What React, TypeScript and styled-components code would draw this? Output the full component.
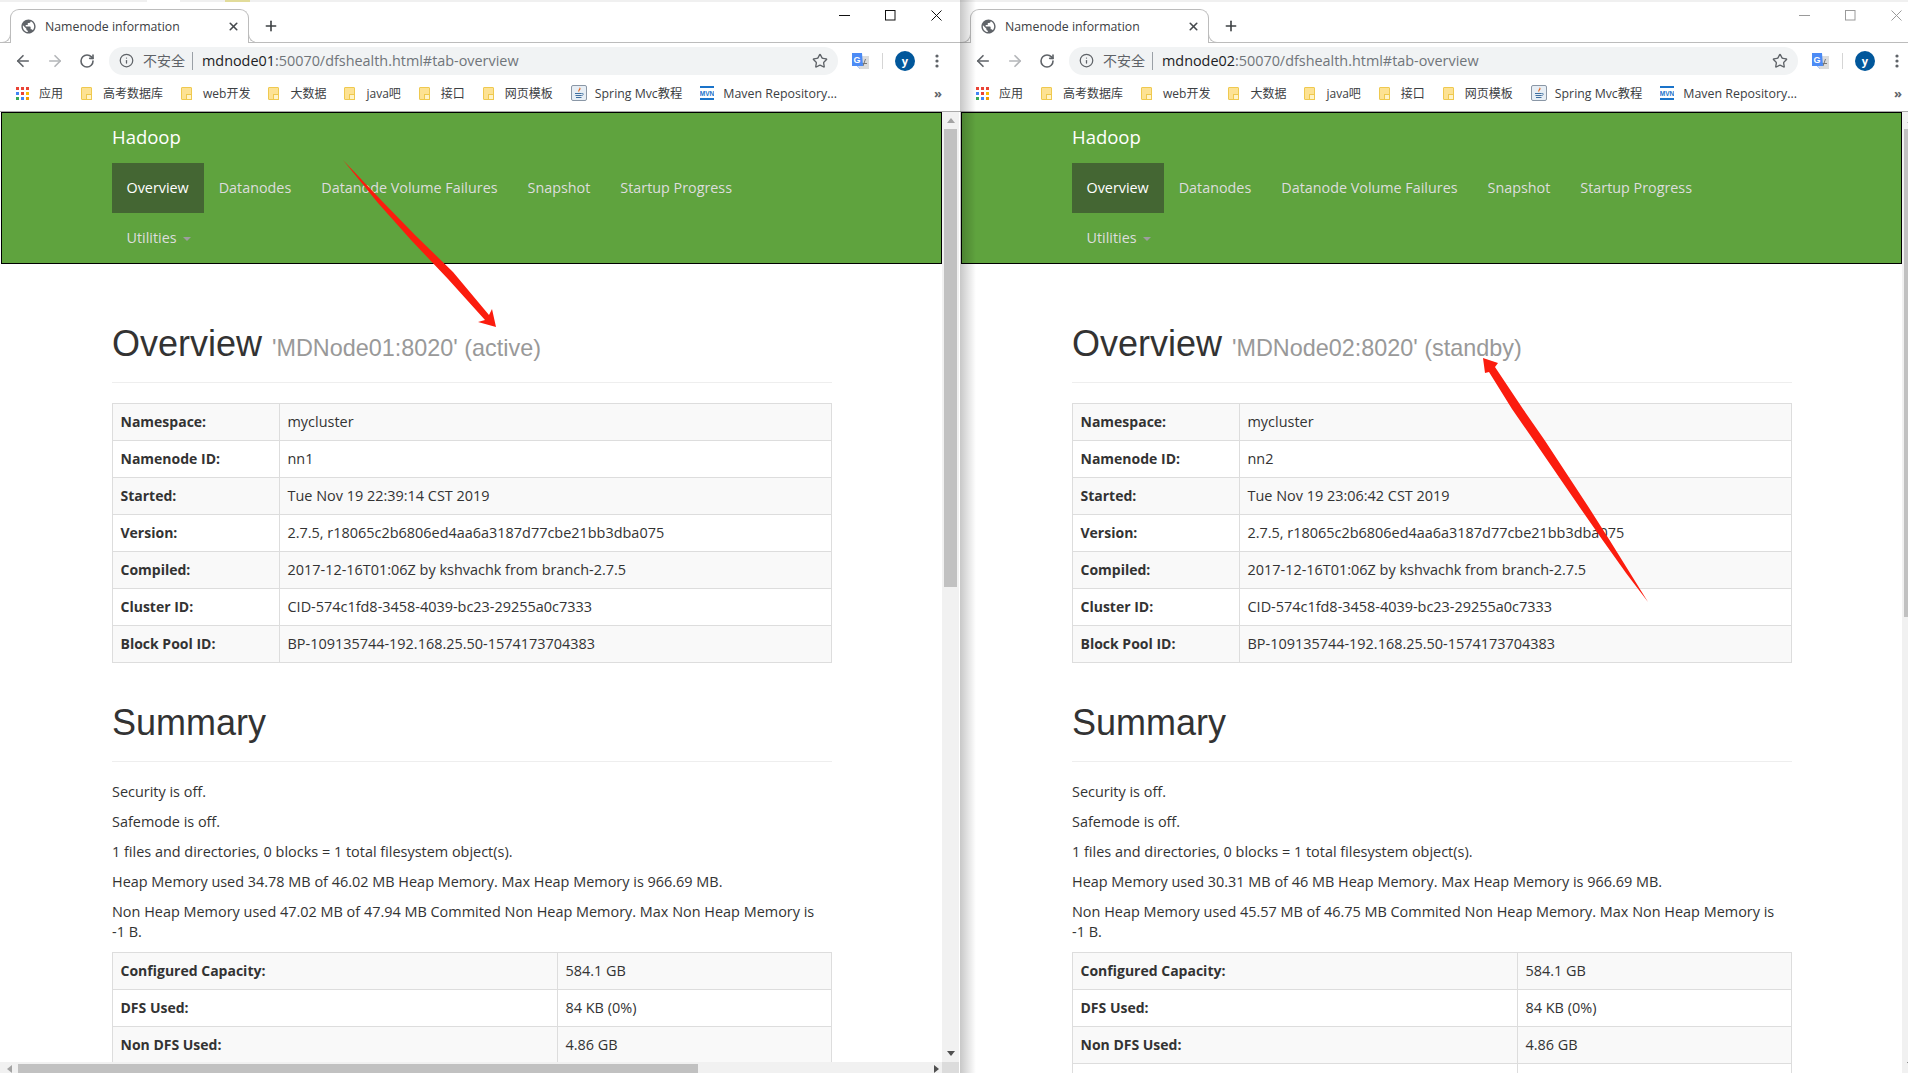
import styled, { createGlobalStyle } from "styled-components";
import { ArrowLeft, ArrowRight, Info, Plus, RotateCw, Star, X } from "lucide-react";

const uiFont = `"Open Sans", "Noto Sans CJK SC", sans-serif`;

const GlobalStyle = createGlobalStyle`
  html, body {
    margin: 0;
    padding: 0;
    background: #fff;
  }
  * {
    box-sizing: border-box;
  }
`;

const Desktop = styled.div`
  position: relative;
  display: flex;
  width: 1908px;
  height: 1073px;
  overflow: hidden;
  font-family: ${uiFont};
`;

const Window = styled.section<{ $shadow?: boolean }>`
  position: relative;
  flex: none;
  display: flex;
  flex-direction: column;
  width: 960px;
  height: 1073px;
  background: #fff;

  &::before {
    content: "";
    display: ${(p) => (p.$shadow ? "block" : "none")};
    position: absolute;
    top: 0;
    bottom: 0;
    left: 0;
    width: 16px;
    background: linear-gradient(90deg, rgba(0, 0, 0, 0.22), rgba(0, 0, 0, 0));
    pointer-events: none;
    z-index: 2;
  }
`;

const TopSliver = styled.div<{ $behind?: boolean }>`
  flex: none;
  height: 2px;
  background: ${(p) =>
    p.$behind
      ? "linear-gradient(90deg, #f0f0f0 147px, #fff 147px, #fff 180px, #f0f0f0 180px, #f0f0f0 225px, #e2dc9a 225px, #e2dc9a 250px, #f0f0f0 250px)"
      : "#f0f0f0"};
`;

const TabStrip = styled.div`
  flex: none;
  display: flex;
  align-items: flex-start;
  height: 41px;
  border-bottom: 1px solid #bcbcbc;
  background: #fff;
`;

const Tab = styled.div`
  position: relative;
  display: flex;
  align-items: center;
  width: 239px;
  height: 34px;
  margin: 7px 0 0 10px;
  padding: 0 8px 0 9px;
  background: #fff;
  border: 1px solid #bcbcbc;
  border-bottom: 0;
  border-radius: 9px 9px 0 0;

  &::before,
  &::after {
    content: "";
    position: absolute;
    bottom: 0;
    width: 9px;
    height: 9px;
    border-bottom: 1px solid #bcbcbc;
  }
  &::before {
    left: -10px;
    border-right: 1px solid #bcbcbc;
    border-bottom-right-radius: 9px;
  }
  &::after {
    right: -10px;
    border-left: 1px solid #bcbcbc;
    border-bottom-left-radius: 9px;
  }
`;

const TabTitle = styled.span`
  flex: 1;
  margin-left: 8px;
  font-size: 12.3px;
  color: #3c4043;
  white-space: nowrap;
`;

const NewTab = styled.div`
  display: flex;
  align-items: center;
  justify-content: center;
  width: 18px;
  height: 34px;
  margin: 7px 0 0 13px;
  color: #3c4043;
`;

const WindowControls = styled.div<{ $dim?: boolean }>`
  display: flex;
  margin-left: auto;
  margin-right: 1px;
  color: ${(p) => (p.$dim ? "#9a9a9a" : "#111")};
`;

const WindowControl = styled.div`
  display: flex;
  align-items: center;
  justify-content: center;
  width: 46px;
  height: 26px;
`;

const Toolbar = styled.div`
  flex: none;
  display: flex;
  align-items: center;
  height: 35px;
  padding-left: 7px;
  background: #fff;
`;

const ToolButton = styled.div<{ $muted?: boolean }>`
  display: flex;
  align-items: center;
  justify-content: center;
  width: 32px;
  height: 28px;
  color: ${(p) => (p.$muted ? "#b4b6b9" : "#5f6368")};
`;

const Omnibox = styled.div`
  display: flex;
  align-items: center;
  width: 729px;
  height: 28px;
  margin: 0 6px;
  padding: 0 10px;
  border-radius: 14px;
  background: #f1f3f4;
  color: #5f6368;
`;

const Insecure = styled.span`
  margin: -2px 0 0 9px;
  font-size: 14px;
  white-space: nowrap;
`;

const OmniDivider = styled.span`
  width: 1px;
  height: 18px;
  margin: 0 9px 0 7px;
  background: #9aa0a6;
`;

const Url = styled.span`
  flex: 1;
  font-size: 14.4px;
  color: #70757a;
  white-space: nowrap;

  b {
    font-weight: 400;
    color: #202124;
  }
`;

const ToolDivider = styled.span`
  width: 1px;
  height: 16px;
  margin: 0 6px;
  background: #d5d5d5;
`;

const Avatar = styled.span`
  display: flex;
  align-items: center;
  justify-content: center;
  width: 20px;
  height: 20px;
  border-radius: 50%;
  background: #01579b;
  color: #fff;
  font-size: 11px;
  font-weight: 700;
  line-height: 1;
`;

const Bookmarks = styled.div`
  flex: none;
  display: flex;
  align-items: center;
  height: 34px;
  padding: 0 18px 3px 16px;
  border-bottom: 1px solid #a9a9a9;
  background: #fff;
`;

const Bookmark = styled.span<{ $gap?: number; $tail?: number; $size?: number }>`
  display: flex;
  align-items: center;
  gap: ${(p) => p.$gap ?? 11}px;
  margin-right: ${(p) => p.$tail ?? 18}px;
  font-size: ${(p) => p.$size ?? 12}px;
  color: #3c4043;
  white-space: nowrap;
`;

const AppsGrid = styled.span`
  display: grid;
  grid-template-columns: repeat(3, 3px);
  gap: 2px;
  width: 13px;
`;

const AppsDot = styled.i<{ $color: string }>`
  display: block;
  height: 3px;
  background: ${(p) => p.$color};
`;

const Folder = styled.span`
  position: relative;
  display: block;
  width: 11px;
  height: 13px;
  border: 1px solid #efc94f;
  border-radius: 1px;
  background: #fde293;

  &::after {
    content: "";
    position: absolute;
    right: -1px;
    bottom: -1px;
    width: 4px;
    height: 4px;
    border: 1px solid #efc94f;
    background: #fff3c7;
  }
`;

const MoreBookmarks = styled.span`
  margin-left: auto;
  font-size: 13px;
  font-weight: 700;
  line-height: 1;
  color: #5f6368;
`;

const Viewport = styled.div`
  flex: 1;
  min-height: 0;
  display: grid;
  grid-template-columns: 942px 17px;
  grid-template-rows: minmax(0, 1fr) auto;
`;

const Page = styled.main`
  overflow: hidden;
  color: #333;
  font-size: 14.45px;
  line-height: 20px;
`;

const Navbar = styled.nav`
  margin-left: 1px;
  padding: 0 110px;
  border: 1px solid #000;
  background: #5fa33e;
`;

const Brand = styled.div`
  height: 50px;
  font-size: 18.5px;
  line-height: 48px;
  color: #fff;
`;

const NavRow = styled.div`
  display: flex;
  height: 50px;
`;

const NavLink = styled.a<{ $active?: boolean }>`
  display: flex;
  align-items: center;
  padding: 0 15.5px 0 14.5px;
  background: ${(p) => (p.$active ? "#446633" : "transparent")};
  color: ${(p) => (p.$active ? "#fff" : "#ddd")};
  font-size: 14.35px;
`;

const Caret = styled.span`
  width: 0;
  height: 0;
  margin: 2px 0 0 6px;
  border-top: 4px solid #9d9d9d;
  border-left: 4px solid transparent;
  border-right: 4px solid transparent;
`;

const Content = styled.div`
  width: 720px;
  margin-left: 112px;
`;

const PageHeader = styled.h1<{ $top: number }>`
  margin: ${(p) => p.$top}px 0 20px;
  padding-bottom: 9px;
  border-bottom: 1px solid #eee;
  font-family: "Liberation Sans", Arial, sans-serif;
  font-size: 36px;
  font-weight: 500;
  line-height: 40px;
  height: 59px;

  small {
    font-size: 23.4px;
    font-weight: 400;
    color: #999;
  }
`;

const InfoTable = styled.table<{ $labelWidth: number }>`
  width: 720px;
  margin-bottom: 20px;
  border-collapse: collapse;
  table-layout: fixed;

  th,
  td {
    height: 37px;
    padding: 8px 7.5px;
    border: 1px solid #ddd;
    text-align: left;
    vertical-align: top;
    white-space: nowrap;
  }
  th {
    width: ${(p) => p.$labelWidth}px;
    font-size: 14px;
    font-weight: 700;
  }
  tr:nth-child(odd) {
    background: #f9f9f9;
  }
`;

const Para = styled.p`
  margin: 0 0 10px;
`;

const VScrollbar = styled.div`
  display: flex;
  flex-direction: column;
  align-items: center;
  background: #f1f1f1;
`;

const ScrollArrow = styled.span<{ $dir: "up" | "down" | "left" | "right"; $dark?: boolean }>`
  flex: none;
  width: 0;
  height: 0;
  border: 4px solid transparent;
  ${(p) => {
    const color = p.$dark ? "#505050" : "#a3a3a3";
    if (p.$dir === "up") return `border-top-width: 0; border-bottom: 5px solid ${color}; margin: 6px 0;`;
    if (p.$dir === "down") return `border-bottom-width: 0; border-top: 5px solid ${color}; margin: auto 0 6px;`;
    if (p.$dir === "left") return `border-left-width: 0; border-right: 5px solid ${color}; margin: 0 6px 0 7px;`;
    return `border-right-width: 0; border-left: 5px solid ${color}; margin: 0 3px 0 auto;`;
  }}
`;

const VThumb = styled.div<{ $height: number }>`
  flex: none;
  width: 13px;
  height: ${(p) => p.$height}px;
  background: #c1c1c1;
`;

const HScrollbar = styled.div`
  display: flex;
  align-items: center;
  height: 11px;
  padding-top: 2px;
  background: #f1f1f1;
`;

const HThumb = styled.div`
  flex: none;
  width: 680px;
  height: 9px;
  background: #c1c1c1;
`;

const ScrollCorner = styled.div`
  background: #dcdcdc;
`;

const ArrowLayer = styled.svg`
  position: absolute;
  top: 0;
  left: 0;
  z-index: 3;
  pointer-events: none;
`;

const GLOBE =
  "M12 2C6.48 2 2 6.48 2 12s4.48 10 10 10 10-4.48 10-10S17.52 2 12 2zm-1 17.93c-3.95-.49-7-3.85-7-7.93 0-.62.08-1.21.21-1.79L9 15v1c0 1.1.9 2 2 2v1.93zm6.9-2.54c-.26-.81-1-1.39-1.9-1.39h-1v-3c0-.55-.45-1-1-1H8v-2h2c.55 0 1-.45 1-1V7h2c1.1 0 2-.9 2-2v-.41c2.93 1.19 5 4.06 5 7.41 0 2.08-.8 3.97-2.1 5.39z";

const APPS_COLORS = ["#ea4335", "#ea4335", "#ea4335", "#4285f4", "#ea4335", "#fbbc05", "#34a853", "#4285f4", "#f29900"];

const FOLDERS = ["高考数据库", "web开发", "大数据", "java吧", "接口", "网页模板"];

function TranslateIcon() {
  return (
    <svg width="18" height="18" viewBox="0 0 18 18">
      <rect x="8" y="4" width="10" height="13" fill="#dcdcdc" />
      <path d="M14.5 7l-2.5 7M11 11.5h5" stroke="#777" strokeWidth="1" fill="none" />
      <path d="M1 1h10l1 13H7l2 3-3-3H1z" fill="#4c8bf5" />
      <text x="6" y="10.5" textAnchor="middle" fontSize="9" fontWeight="700" fill="#fff" fontFamily="Liberation Sans, sans-serif">
        G
      </text>
    </svg>
  );
}

function JavaIcon() {
  return (
    <svg width="16" height="16" viewBox="0 0 16 16">
      <rect x="0.5" y="0.5" width="15" height="15" rx="1.5" fill="#e7eef5" stroke="#8a97a6" />
      <path d="M8.5 2c1 1.6-1.8 2.6-1 4.4.3.6.8.9.8.9-1-1.4 2-2.4 1.1-4C9.2 2.8 8.9 2.4 8.5 2z" fill="#e5661d" />
      <path d="M4 8.5h6.5M4.5 10.5h6M5 12.5h5.5" stroke="#3f6f9f" strokeWidth="1" />
      <path d="M10.5 8.5h1.3c1 0 .6 2-1.3 2" stroke="#3f6f9f" strokeWidth="0.8" fill="none" />
    </svg>
  );
}

function MavenIcon() {
  return (
    <svg width="14" height="14" viewBox="0 0 14 14">
      <rect width="14" height="2" y="0" fill="#1a73c9" />
      <rect width="14" height="2" y="12" fill="#1a73c9" />
      <text x="7" y="9.6" textAnchor="middle" fontSize="6.5" fontWeight="700" fill="#1a73c9" fontFamily="Liberation Sans, sans-serif">
        MVN
      </text>
    </svg>
  );
}

type Row = [string, string];

interface NodeInfo {
  host: string;
  nodeLabel: string;
  dimControls?: boolean;
  shadow?: boolean;
  behind?: boolean;
  thumbHeight: number;
  showHBar: boolean;
  overview: Row[];
  heap: string;
  nonHeap: string;
}

const sharedRows = (id: string, started: string): Row[] => [
  ["Namespace:", "mycluster"],
  ["Namenode ID:", id],
  ["Started:", started],
  ["Version:", "2.7.5, r18065c2b6806ed4aa6a3187d77cbe21bb3dba075"],
  ["Compiled:", "2017-12-16T01:06Z by kshvachk from branch-2.7.5"],
  ["Cluster ID:", "CID-574c1fd8-3458-4039-bc23-29255a0c7333"],
  ["Block Pool ID:", "BP-109135744-192.168.25.50-1574173704383"],
];

// last row only peeks in above the window edge, its text is below the fold
const capacity: Row[] = [
  ["Configured Capacity:", "584.1 GB"],
  ["DFS Used:", "84 KB (0%)"],
  ["Non DFS Used:", "4.86 GB"],
  ["", ""],
];

const nodes: NodeInfo[] = [
  {
    host: "mdnode01",
    nodeLabel: "'MDNode01:8020' (active)",
    behind: true,
    thumbHeight: 458,
    showHBar: true,
    overview: sharedRows("nn1", "Tue Nov 19 22:39:14 CST 2019"),
    heap: "Heap Memory used 34.78 MB of 46.02 MB Heap Memory. Max Heap Memory is 966.69 MB.",
    nonHeap: "Non Heap Memory used 47.02 MB of 47.94 MB Commited Non Heap Memory. Max Non Heap Memory is -1\u00a0B.",
  },
  {
    host: "mdnode02",
    nodeLabel: "'MDNode02:8020' (standby)",
    dimControls: true,
    shadow: true,
    thumbHeight: 488,
    showHBar: false,
    overview: sharedRows("nn2", "Tue Nov 19 23:06:42 CST 2019"),
    heap: "Heap Memory used 30.31 MB of 46 MB Heap Memory. Max Heap Memory is 966.69 MB.",
    nonHeap: "Non Heap Memory used 45.57 MB of 46.75 MB Commited Non Heap Memory. Max Non Heap Memory is -1\u00a0B.",
  },
];

function Browser({ node }: { node: NodeInfo }) {
  return (
    <Window $shadow={node.shadow}>
      <TopSliver $behind={node.behind} />
      <TabStrip>
        <Tab>
          <svg width="17" height="17" viewBox="0 0 24 24" fill="#5f6368">
            <path d={GLOBE} />
          </svg>
          <TabTitle>Namenode information</TabTitle>
          <X size={13} strokeWidth={3} color="#45494d" />
        </Tab>
        <NewTab>
          <Plus size={16} strokeWidth={2.4} />
        </NewTab>
        <WindowControls $dim={node.dimControls}>
          <WindowControl>
            <svg width="11" height="11" viewBox="0 0 11 11" stroke="currentColor" fill="none">
              <path d="M0 5.5h11" />
            </svg>
          </WindowControl>
          <WindowControl>
            <svg width="11" height="11" viewBox="0 0 11 11" stroke="currentColor" fill="none">
              <rect x="0.5" y="0.5" width="9.5" height="9.5" />
            </svg>
          </WindowControl>
          <WindowControl>
            <svg width="11" height="11" viewBox="0 0 11 11" stroke="currentColor" fill="none">
              <path d="M0.5 0.5l10 10M10.5 0.5l-10 10" />
            </svg>
          </WindowControl>
        </WindowControls>
      </TabStrip>

      <Toolbar>
        <ToolButton>
          <ArrowLeft size={18} strokeWidth={2.2} />
        </ToolButton>
        <ToolButton $muted>
          <ArrowRight size={18} strokeWidth={2.2} />
        </ToolButton>
        <ToolButton>
          <RotateCw size={16} strokeWidth={2.4} />
        </ToolButton>
        <Omnibox>
          <Info size={15} strokeWidth={2} />
          <Insecure>不安全</Insecure>
          <OmniDivider />
          <Url>
            <b>{node.host}</b>:50070/dfshealth.html#tab-overview
          </Url>
          <Star size={16} strokeWidth={2} />
        </Omnibox>
        <ToolButton>
          <TranslateIcon />
        </ToolButton>
        <ToolDivider />
        <ToolButton>
          <Avatar>y</Avatar>
        </ToolButton>
        <ToolButton>
          <svg width="4" height="14" viewBox="0 0 4 14" fill="#5f6368">
            <circle cx="2" cy="2" r="1.6" />
            <circle cx="2" cy="7" r="1.6" />
            <circle cx="2" cy="12" r="1.6" />
          </svg>
        </ToolButton>
      </Toolbar>

      <Bookmarks>
        <Bookmark $gap={10}>
          <AppsGrid>
            {APPS_COLORS.map((color, index) => (
              <AppsDot key={index} $color={color} />
            ))}
          </AppsGrid>
          应用
        </Bookmark>
        {FOLDERS.map((name) => (
          <Bookmark key={name}>
            <Folder />
            {name}
          </Bookmark>
        ))}
        <Bookmark $gap={8} $size={12.3}>
          <JavaIcon />
          Spring Mvc教程
        </Bookmark>
        <Bookmark $gap={9} $size={12.4}>
          <MavenIcon />
          Maven Repository...
        </Bookmark>
        <MoreBookmarks>»</MoreBookmarks>
      </Bookmarks>

      <Viewport>
        <Page>
          <Navbar>
            <Brand>Hadoop</Brand>
            <NavRow>
              <NavLink $active>Overview</NavLink>
              <NavLink>Datanodes</NavLink>
              <NavLink>Datanode Volume Failures</NavLink>
              <NavLink>Snapshot</NavLink>
              <NavLink>Startup Progress</NavLink>
            </NavRow>
            <NavRow>
              <NavLink>
                Utilities
                <Caret />
              </NavLink>
            </NavRow>
          </Navbar>
          <Content>
            <PageHeader $top={60}>
              Overview <small>{node.nodeLabel}</small>
            </PageHeader>
            <InfoTable $labelWidth={167}>
              <tbody>
                {node.overview.map(([label, value]) => (
                  <tr key={label}>
                    <th>{label}</th>
                    <td>{value}</td>
                  </tr>
                ))}
              </tbody>
            </InfoTable>
            <PageHeader $top={40}>Summary</PageHeader>
            <Para>Security is off.</Para>
            <Para>Safemode is off.</Para>
            <Para>1 files and directories, 0 blocks = 1 total filesystem object(s).</Para>
            <Para>{node.heap}</Para>
            <Para>{node.nonHeap}</Para>
            <InfoTable $labelWidth={445}>
              <tbody>
                {capacity.map(([label, value], index) => (
                  <tr key={index}>
                    <th>{label}</th>
                    <td>{value}</td>
                  </tr>
                ))}
              </tbody>
            </InfoTable>
          </Content>
        </Page>
        <VScrollbar>
          <ScrollArrow $dir="up" />
          <VThumb $height={node.thumbHeight} />
          <ScrollArrow $dir="down" $dark />
        </VScrollbar>
        {node.showHBar && (
          <>
            <HScrollbar>
              <ScrollArrow $dir="left" />
              <HThumb />
              <ScrollArrow $dir="right" $dark />
            </HScrollbar>
            <ScrollCorner />
          </>
        )}
      </Viewport>
    </Window>
  );
}

export default function App() {
  return (
    <>
      <GlobalStyle />
      <Desktop>
        {nodes.map((node) => (
          <Browser key={node.host} node={node} />
        ))}
        {/* hand drawn annotation arrows pointing at the node state */}
        <ArrowLayer width="1908" height="1073" viewBox="0 0 1908 1073">
          <polygon
            points="343,160 380,199 415,235 453,272 489,315 492,309 496,327 478,322 485,320 448,279 411,240 378,203"
            fill="#fb1c0e"
          />
          <polygon
            points="1648,602 1630,573 1609.5,540 1588.5,507 1544.5,440 1523,409 1495,367 1498,363 1483,358 1485,373 1489,372 1512,409 1533.5,440 1579.5,507 1602.5,540 1626,573"
            fill="#fb1c0e"
          />
        </ArrowLayer>
      </Desktop>
    </>
  );
}
